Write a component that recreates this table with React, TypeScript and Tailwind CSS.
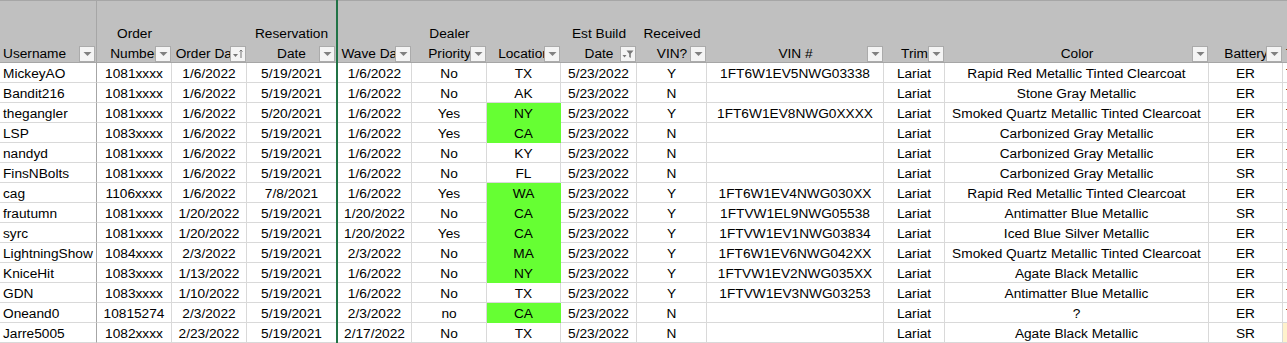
import React from "react";

type Col = {
  key: string;
  w: string;
  head: string[];
  align: "left" | "center";
  icon?: "sort" | "filter";
};

const COLUMNS: Col[] = [
  { key: "user", w: "w-[97px]", head: ["Username"], align: "left" },
  { key: "order", w: "w-[75px]", head: ["Order", "Number"], align: "center" },
  { key: "odate", w: "w-[75px]", head: ["Order Date"], align: "center", icon: "sort" },
  { key: "rdate", w: "w-[89px]", head: ["Reservation", "Date"], align: "center" },
  { key: "wave", w: "w-[74px]", head: ["Wave Date"], align: "center" },
  { key: "dealer", w: "w-[75px]", head: ["Dealer", "Priority"], align: "center" },
  { key: "loc", w: "w-[74px]", head: ["Location"], align: "center" },
  { key: "build", w: "w-[76px]", head: ["Est Build", "Date"], align: "center", icon: "filter" },
  { key: "recv", w: "w-[70px]", head: ["Received", "VIN?"], align: "center" },
  { key: "vin", w: "w-[177px]", head: ["VIN #"], align: "center" },
  { key: "trim", w: "w-[61px]", head: ["Trim"], align: "center" },
  { key: "color", w: "w-[264px]", head: ["Color"], align: "center" },
  { key: "battery", w: "w-[74px]", head: ["Battery"], align: "center" },
];

type Row = string[];

// username, order, order date, reservation, wave, dealer, location, build, recv, vin, trim, color, battery
const ROWS: Row[] = [
  ["MickeyAO", "1081xxxx", "1/6/2022", "5/19/2021", "1/6/2022", "No", "TX", "5/23/2022", "Y", "1FT6W1EV5NWG03338", "Lariat", "Rapid Red Metallic Tinted Clearcoat", "ER"],
  ["Bandit216", "1081xxxx", "1/6/2022", "5/19/2021", "1/6/2022", "No", "AK", "5/23/2022", "N", "", "Lariat", "Stone Gray Metallic", "ER"],
  ["thegangler", "1081xxxx", "1/6/2022", "5/20/2021", "1/6/2022", "Yes", "NY", "5/23/2022", "Y", "1FT6W1EV8NWG0XXXX", "Lariat", "Smoked Quartz Metallic Tinted Clearcoat", "ER"],
  ["LSP", "1083xxxx", "1/6/2022", "5/19/2021", "1/6/2022", "Yes", "CA", "5/23/2022", "N", "", "Lariat", "Carbonized Gray Metallic", "ER"],
  ["nandyd", "1081xxxx", "1/6/2022", "5/19/2021", "1/6/2022", "No", "KY", "5/23/2022", "N", "", "Lariat", "Carbonized Gray Metallic", "ER"],
  ["FinsNBolts", "1081xxxx", "1/6/2022", "5/19/2021", "1/6/2022", "No", "FL", "5/23/2022", "N", "", "Lariat", "Carbonized Gray Metallic", "SR"],
  ["cag", "1106xxxx", "1/6/2022", "7/8/2021", "1/6/2022", "Yes", "WA", "5/23/2022", "Y", "1FT6W1EV4NWG030XX", "Lariat", "Rapid Red Metallic Tinted Clearcoat", "ER"],
  ["frautumn", "1081xxxx", "1/20/2022", "5/19/2021", "1/20/2022", "No", "CA", "5/23/2022", "Y", "1FTVW1EL9NWG05538", "Lariat", "Antimatter Blue Metallic", "SR"],
  ["syrc", "1081xxxx", "1/20/2022", "5/19/2021", "1/20/2022", "Yes", "CA", "5/23/2022", "Y", "1FTVW1EV1NWG03834", "Lariat", "Iced Blue Silver Metallic", "ER"],
  ["LightningShow", "1084xxxx", "2/3/2022", "5/19/2021", "2/3/2022", "No", "MA", "5/23/2022", "Y", "1FT6W1EV6NWG042XX", "Lariat", "Smoked Quartz Metallic Tinted Clearcoat", "ER"],
  ["KniceHit", "1083xxxx", "1/13/2022", "5/19/2021", "1/6/2022", "No", "NY", "5/23/2022", "Y", "1FTVW1EV2NWG035XX", "Lariat", "Agate Black Metallic", "ER"],
  ["GDN", "1083xxxx", "1/10/2022", "5/19/2021", "1/6/2022", "No", "TX", "5/23/2022", "Y", "1FTVW1EV3NWG03253", "Lariat", "Antimatter Blue Metallic", "ER"],
  ["Oneand0", "10815274", "2/3/2022", "5/19/2021", "2/3/2022", "no", "CA", "5/23/2022", "N", "", "Lariat", "?", "ER"],
  ["Jarre5005", "1082xxxx", "2/23/2022", "5/19/2021", "2/17/2022", "No", "TX", "5/23/2022", "N", "", "Lariat", "Agate Black Metallic", "SR"],
];

// location cells filled green
const GREEN = [2, 3, 6, 7, 8, 9, 10, 12];

const FilterButton = ({ icon }: { icon?: "sort" | "filter" }) => (
  <div className="absolute right-[1px] bottom-0 w-[16px] h-[16px] bg-[#f4f4f4] border border-[#ababab] flex items-center justify-center">
    {icon === "sort" ? (
      <svg width="12" height="12" viewBox="0 0 12 12">
        <path d="M1 6h5l-2.5 3z" fill="#777" />
        <path d="M9 2v8M7.5 3.5L9 2l1.5 1.5" stroke="#777" strokeWidth="1" fill="none" />
      </svg>
    ) : icon === "filter" ? (
      <svg width="12" height="12" viewBox="0 0 12 12">
        <path d="M0.5 7h4l-2 2.5z" fill="#777" />
        <path d="M4.5 2.5h7l-2.7 3.2v4.3l-1.6-1v-3.3z" fill="#777" />
      </svg>
    ) : (
      <svg width="9" height="6" viewBox="0 0 9 6">
        <path d="M0.5 1h8l-4 4z" fill="#808080" />
      </svg>
    )}
  </div>
);

const FreezeLine = () => <div className="w-[2px] shrink-0 bg-[#217346]" />;

export default function App() {
  return (
    <div className="w-[1287px] h-[343px] overflow-hidden bg-white text-black text-[13.7px] font-['Liberation_Sans',Arial,sans-serif]">
      {/* header */}
      <div className="flex h-[63px] bg-[#c0c0c0]">
        {COLUMNS.map((c, i) => (
          <React.Fragment key={c.key}>
            <div
              className={`${c.w} shrink-0 relative h-full border-t border-b border-[#a6a6a6] ${
                i === 0 ? "border-r" : ""
              } flex flex-col justify-end overflow-hidden whitespace-nowrap leading-[20px] ${
                c.align === "left" ? "items-start pl-[3px]" : "items-center"
              }`}
            >
              {c.head.map((h) => (
                <span key={h} className="translate-y-[2px]">
                  {h}
                </span>
              ))}
              <FilterButton icon={c.icon} />
            </div>
            {c.key === "rdate" && <FreezeLine />}
          </React.Fragment>
        ))}
        <div className="flex-1 h-full border-t border-b border-[#a6a6a6] flex items-end pl-[3px] leading-[20px] overflow-hidden">
          <span className="translate-y-[2px]">T</span>
        </div>
      </div>

      {/* rows */}
      {ROWS.map((row, r) => (
        <div key={r} className="flex h-[20px]">
          {COLUMNS.map((c, i) => {
            const green = i === 6 && GREEN.includes(r);
            return (
              <React.Fragment key={c.key}>
                <div
                  className={`${c.w} shrink-0 h-full border-b border-r ${
                    green
                      ? "bg-[#66ff33] border-[#66ff33]"
                      : i === 0
                      ? "border-b-[#d9d9d9] border-r-[#a6a6a6]"
                      : "border-[#d9d9d9]"
                  } ${c.key === "rdate" ? "border-r-0" : ""} leading-[21px] whitespace-nowrap overflow-hidden ${
                    c.align === "left" ? "text-left pl-[3px]" : "text-center"
                  }`}
                >
                  {row[i]}
                </div>
                {c.key === "rdate" && <FreezeLine />}
              </React.Fragment>
            );
          })}
          <div
            className={`flex-1 h-full border-b border-[#d9d9d9] pl-[3px] leading-[21px] overflow-hidden ${
              r === ROWS.length - 1 ? "bg-[#fff2cc]" : ""
            }`}
          >
            {r === ROWS.length - 1 ? "" : "T"}
          </div>
        </div>
      ))}
    </div>
  );
}
